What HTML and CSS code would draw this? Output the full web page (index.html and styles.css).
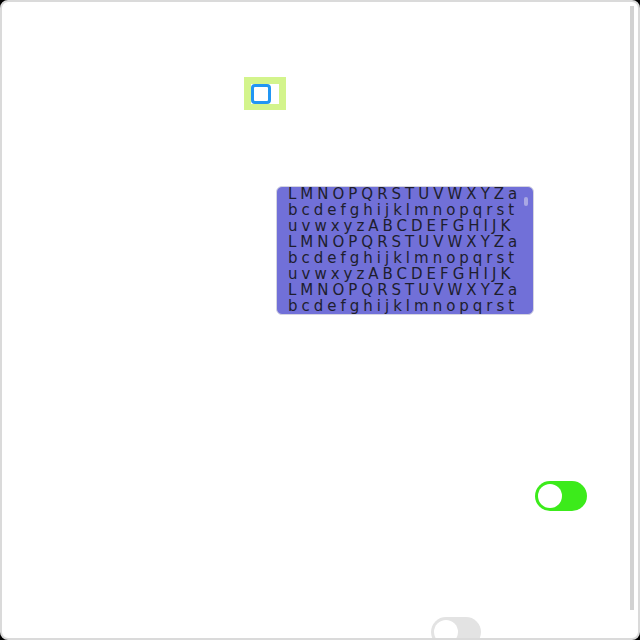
FILE: index.html
```html
<!DOCTYPE html>
<html>
<head>
<meta charset="utf-8">
<link rel="stylesheet" href="styles.css">
</head>
<body>
<div class="frame">
  <div class="stack">
    <label class="check-wrap">
      <span class="check-inner"><span class="check-box"></span></span>
    </label>
    <div class="textbox">
      <div class="text-lines">
        <div>LMNOPQRSTUVWXYZa</div>
        <div>bcdefghijklmnopqrst</div>
        <div>uvwxyzABCDEFGHIJK</div>
        <div>LMNOPQRSTUVWXYZa</div>
        <div>bcdefghijklmnopqrst</div>
        <div>uvwxyzABCDEFGHIJK</div>
        <div>LMNOPQRSTUVWXYZa</div>
        <div>bcdefghijklmnopqrst</div>
      </div>
      <span class="text-thumb"></span>
    </div>
    <span class="toggle toggle-on"><span class="knob"></span></span>
    <span class="toggle toggle-off"><span class="knob"></span></span>
  </div>
  <span class="frame-thumb"></span>
</div>
</body>
</html>
```
FILE: styles.css
```css
html, body {
  margin: 0;
  padding: 0;
  background: #000;
}
.frame {
  position: relative;
  width: 640px;
  height: 640px;
  box-sizing: border-box;
  border: 2px solid #dadada;
  border-radius: 8px;
  background: #fff;
  overflow: hidden;
}
.stack {
  display: flex;
  flex-direction: column;
  align-items: flex-start;
}
.check-wrap {
  display: block;
  margin: 75px 0 0 242px;
  padding: 7px 7px 6px 7px;
  background: #d3f48c;
}
.check-inner {
  display: flex;
  width: 28px;
  height: 20px;
  background: #fff;
}
.check-box {
  width: 20px;
  height: 20px;
  box-sizing: border-box;
  border: 3px solid #2196f3;
  border-radius: 4px;
}
.textbox {
  position: relative;
  margin: 76px 0 0 274px;
  width: 258px;
  height: 129px;
  box-sizing: border-box;
  border: 1px solid #d4d4e0;
  border-radius: 6px;
  background: #7170d8;
  overflow: hidden;
}
.text-lines {
  margin-top: -1px;
  padding-left: 11px;
  font-family: "DejaVu Sans", sans-serif;
  font-size: 15px;
  line-height: 16px;
  letter-spacing: 4px;
  color: #1e1e2e;
  white-space: nowrap;
}
.text-thumb {
  position: absolute;
  left: 247px;
  top: 10px;
  width: 4px;
  height: 9px;
  border-radius: 2px;
  background: #a9a8e4;
}
.toggle {
  position: relative;
  display: block;
  height: 30px;
  border-radius: 15px;
}
.toggle .knob {
  position: absolute;
  left: 3px;
  top: 3px;
  width: 24px;
  height: 24px;
  border-radius: 50%;
  background: #fff;
}
.toggle-on {
  width: 52px;
  margin: 166px 0 0 533px;
  background: #3ceb1b;
}
.toggle-off {
  width: 50px;
  margin: 106px 0 0 429px;
  background: #e3e3e3;
}
.frame-thumb {
  position: absolute;
  right: 4px;
  top: 4px;
  width: 4px;
  height: 604px;
  background: #d2d2d2;
}
```
